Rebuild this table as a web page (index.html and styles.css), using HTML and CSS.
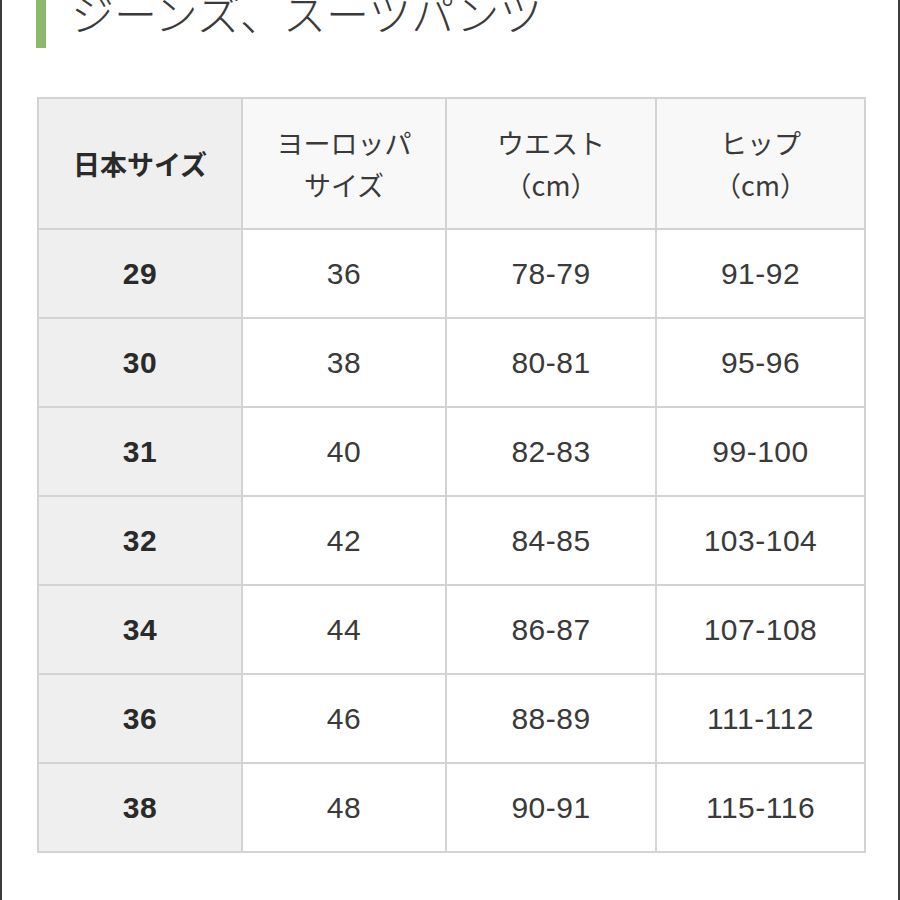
FILE: index.html
```html
<!DOCTYPE html>
<html lang="ja">
<head>
<meta charset="utf-8">
<link rel="stylesheet" href="styles.css">
</head>
<body>
<div class="frame">
  <div class="title-row">
    <div class="bar"></div>
    <h1 class="title">ジーンズ、スーツパンツ</h1>
  </div>
  <table class="size-table">
    <colgroup>
      <col class="c1"><col class="c2"><col class="c3"><col class="c4">
    </colgroup>
    <thead>
      <tr>
        <th class="key">日本サイズ</th>
        <th>ヨーロッパ<br>サイズ</th>
        <th>ウエスト<br>（cm）</th>
        <th>ヒップ<br>（cm）</th>
      </tr>
    </thead>
    <tbody>
      <tr><td class="key">29</td><td>36</td><td>78-79</td><td>91-92</td></tr>
      <tr><td class="key">30</td><td>38</td><td>80-81</td><td>95-96</td></tr>
      <tr><td class="key">31</td><td>40</td><td>82-83</td><td>99-100</td></tr>
      <tr><td class="key">32</td><td>42</td><td>84-85</td><td>103-104</td></tr>
      <tr><td class="key">34</td><td>44</td><td>86-87</td><td>107-108</td></tr>
      <tr><td class="key">36</td><td>46</td><td>88-89</td><td>111-112</td></tr>
      <tr><td class="key">38</td><td>48</td><td>90-91</td><td>115-116</td></tr>
    </tbody>
  </table>
</div>
</body>
</html>
```
FILE: styles.css
```css
html, body {
  margin: 0;
  padding: 0;
  background: #ffffff;
}
.frame {
  box-sizing: border-box;
  width: 900px;
  height: 900px;
  border-left: 2px solid #3c3c3c;
  border-right: 2px solid #3c3c3c;
  padding-left: 34px;
  overflow: hidden;
  font-family: "Liberation Sans", "Noto Sans CJK JP", sans-serif;
  color: #333333;
}
.title-row {
  display: flex;
  align-items: flex-start;
  height: 48px;
}
.bar {
  width: 10px;
  height: 48px;
  background: #8cba6a;
  flex: none;
}
.title {
  margin: -14px 0 0 25px;
  font-family: "Noto Sans CJK JP", sans-serif;
  font-weight: 300;
  font-size: 43px;
  line-height: 52px;
  color: #3a3a3a;
  white-space: nowrap;
}
.size-table {
  margin: 49px 0 0 1px;
  width: 827px;
  table-layout: fixed;
  border-collapse: collapse;
  border: 2px solid #d3d3d3;
}
.c1 { width: 204px; }
.c2 { width: 204px; }
.c3 { width: 210px; }
.c4 { width: 209px; }
.size-table th,
.size-table td {
  border: 2px solid #d3d3d3;
  text-align: center;
  vertical-align: middle;
  padding: 0;
}
.size-table th {
  height: 129px;
  background: #f8f8f8;
  font-family: "Noto Sans CJK JP", sans-serif;
  font-weight: 400;
  font-size: 27px;
  line-height: 42px;
  color: #3a3a3a;
}
.size-table td {
  height: 87px;
  background: #ffffff;
  font-size: 30px;
  letter-spacing: 0.5px;
  color: #3a3a3a;
}
.size-table th.key {
  background: #efefef;
  font-weight: 700;
  color: #2a2a2a;
}
.size-table td.key {
  background: #efefef;
  font-weight: 700;
  color: #2a2a2a;
}
```
